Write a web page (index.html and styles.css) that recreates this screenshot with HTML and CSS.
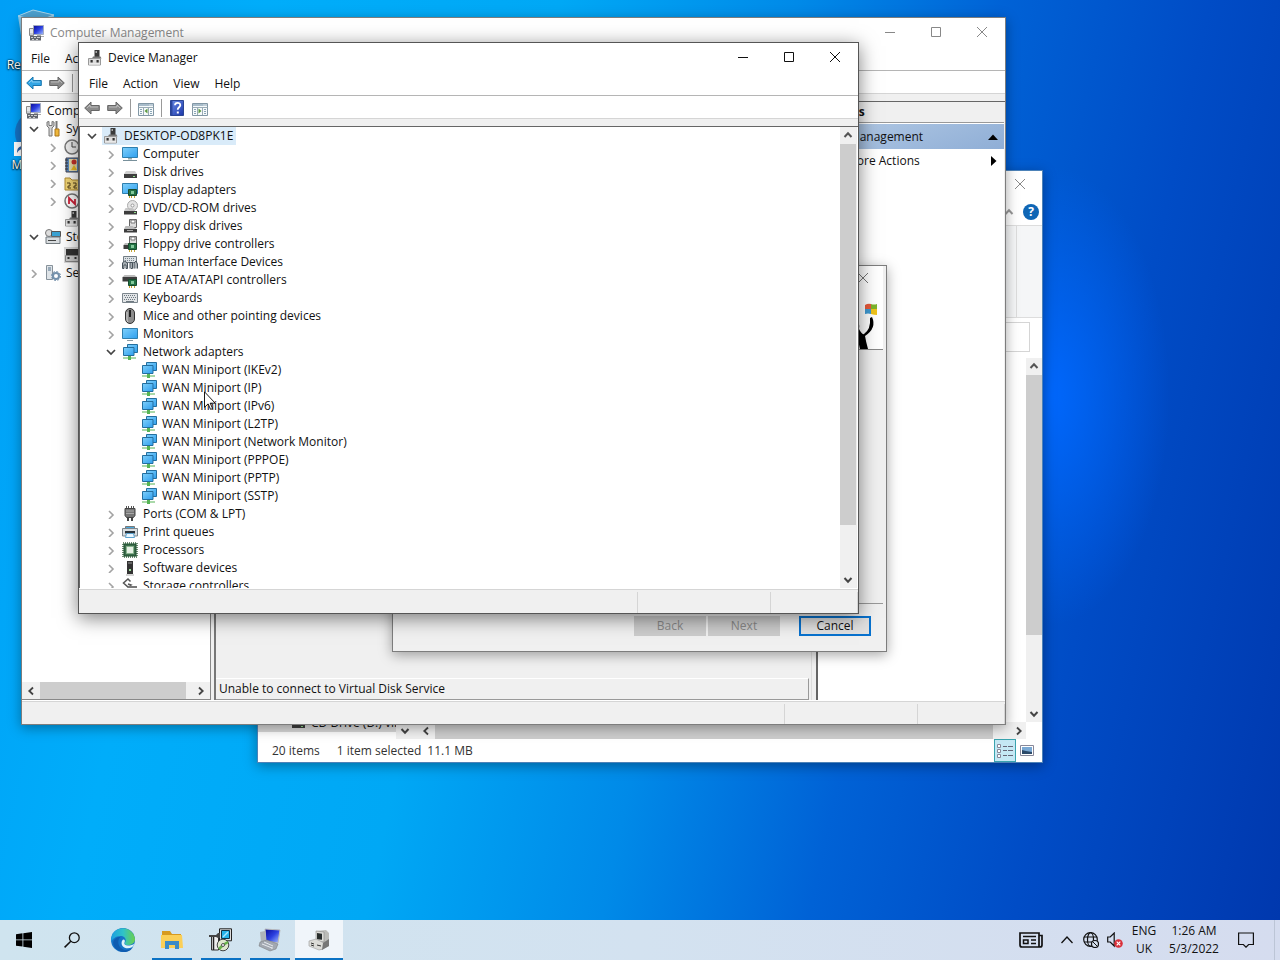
FILE: index.html
```html
<!DOCTYPE html>
<html lang="en">
<head>
<meta charset="utf-8">
<title>Device Manager</title>
<link rel="stylesheet" href="styles.css">
</head>
<body>
<svg class="sprite" aria-hidden="true">
  <defs>
    <linearGradient id="g-screen" x1="0" y1="0" x2="1" y2="1"><stop offset="0" stop-color="#7fd0fb"/><stop offset="1" stop-color="#2f9fee"/></linearGradient>
    <linearGradient id="g-help" x1="0" y1="0" x2="1" y2="1"><stop offset="0" stop-color="#6d8fe8"/><stop offset="1" stop-color="#1a35a8"/></linearGradient>
    <linearGradient id="g-navy" x1="0" y1="0" x2="1" y2="1"><stop offset="0" stop-color="#0a0a96"/><stop offset=".5" stop-color="#2b3fe0"/><stop offset="1" stop-color="#a9c4ff"/></linearGradient>
    <linearGradient id="g-edge" x1="0" y1="0" x2="1" y2="0"><stop offset="0" stop-color="#1d9fe0"/><stop offset=".5" stop-color="#2fc3c9"/><stop offset="1" stop-color="#6cd04a"/></linearGradient>
  </defs>
  <symbol id="down" viewBox="0 0 10 10"><path d="M1 3l4 4 4-4" fill="none" stroke="#444" stroke-width="1.7"/></symbol>
  <symbol id="up" viewBox="0 0 10 10"><path d="M1.500 7L5 3.300 8.500 7" fill="none" stroke="#555" stroke-width="2"/></symbol>
  <symbol id="right" viewBox="0 0 10 10"><path d="M3 2l4 4-4 4" fill="none" stroke="#a3a3a3" stroke-width="1.600"/></symbol>
  <symbol id="sleft" viewBox="0 0 10 10"><path d="M7 1.500L3.300 5 7 8.500" fill="none" stroke="#444" stroke-width="1.800"/></symbol>
  <symbol id="sright" viewBox="0 0 10 10"><path d="M3 1.500L6.700 5 3 8.500" fill="none" stroke="#444" stroke-width="1.800"/></symbol>
  <symbol id="sdown" viewBox="0 0 10 10"><path d="M1.500 3L5 6.700 8.500 3" fill="none" stroke="#444" stroke-width="2"/></symbol>
  <symbol id="min" viewBox="0 0 12 12"><path d="M1 5.500h10" stroke="currentColor"/></symbol>
  <symbol id="max" viewBox="0 0 12 12"><path d="M1.500.5h9v9h-9z" fill="none" stroke="currentColor"/></symbol>
  <symbol id="close" viewBox="0 0 12 12"><path d="M1 0l10 10M11 0L1 10" stroke="currentColor"/></symbol>
  <symbol id="back" viewBox="0 0 16 16"><path d="M.7 8L7 2v3.500h8.300v5H7V14z" stroke-width="1"/><path d="M3 8l3-3v2h8" fill="none" stroke="#fff" stroke-opacity=".4"/></symbol>
  <symbol id="fwd" viewBox="0 0 16 16"><path d="M15.300 8L9 2v3.500H.7v5H9V14z" stroke-width="1"/><path d="M2 7h8V5l3 3" fill="none" stroke="#fff" stroke-opacity=".4"/></symbol>
  <symbol id="panel" viewBox="0 0 16 14"><path d="M.5 1.500h15v12H.5z" fill="#f6fafb" stroke="#8297a5"/><path d="M1 2h14v2H1z" fill="#a8bcca"/><path d="M11.500 3h1m1 0h1" stroke="#fff"/><path d="M.5 5.500h15M5.500 5v8M10.500 5v8" stroke="#9aabb6"/><path d="M2 7.500h2m-2 2h2m-2 2h2m8-4h2m-2 2h2m-2 2h2" stroke="#8aa4b5"/></symbol>
  <symbol id="help" viewBox="0 0 14 16"><path d="M.5.5h13v15H.5z" fill="url(#g-help)" stroke="#2b4592"/><path d="M.5.5h2v15h-2z" fill="#2b469f"/><path d="M5 5.300C5 2 10.300 2 10.300 5.200c0 2-2.600 2.100-2.600 4.500" fill="none" stroke="#fff" stroke-width="1.800"/><path d="M6.800 11.500h2v2h-2z" fill="#fff"/></symbol>
  <symbol id="devmgr" viewBox="0 0 16 16"><path d="M7.500 0h5v7h-5z" fill="#3a3a3a"/><path d="M8.500 1h1.500v2H8.500z" fill="#aaa"/><path d="M6 6.500h7.500l1 2H5z" fill="#777"/><path d="M1.500 8.500h12v6.500h-12z" fill="#dcdcdc" stroke="#999"/><path d="M3.500 10h2.200v2.500H3.500zm6 0h2.200v2.500H9.500z" fill="#333"/><path d="M2 14h11" stroke="#f7f7f7"/></symbol>
  <symbol id="compmgr" viewBox="0 0 16 16"><path d="M4.500.5h10v9h-10z" fill="url(#g-navy)" stroke="#a5adc0"/><path d="M8 10h4v1h3v1H8z" fill="#aaa"/><path d="M.5 3.500h4v7h-4z" fill="#c8ccd2" stroke="#888"/><path d="M1 5h3M1 7h3" stroke="#fff"/><path d="M1 11h11v4.500H1z" fill="#60656d"/><path d="M2 12.500h2m1 0h2m1 0h3m-8 2h2m2 0h2" stroke="#ccc"/></symbol>
  <symbol id="computer" viewBox="0 0 16 16"><path d="M.5 1.500h15v10H.5z" fill="url(#g-screen)" stroke="#2f7fae"/><path d="M6 12h4v1.500H6z" fill="#9aa"/><path d="M1 14.500h14" stroke="#78909b"/></symbol>
  <symbol id="monitor" viewBox="0 0 16 16"><path d="M.5 2.500h15v10H.5z" fill="url(#g-screen)" stroke="#2f7fae"/><path d="M5 14.500h6" stroke="#8a9aa2"/></symbol>
  <symbol id="disk" viewBox="0 0 16 16"><path d="M4 7h9l2 3H2z" fill="#cfcfcf"/><path d="M2 10h13v4H2z" fill="#3d3d3d"/><path d="M11 12.500h2" stroke="#8fe08a"/></symbol>
  <symbol id="chip" viewBox="0 0 16 16"><path d="M6.500 7.500h8v6h-8z" fill="#247345" stroke="#164c2d"/><path d="M9 9h3v3H9z" fill="#82c99a"/><path d="M7.500 14v2m2-2v2m3-2v2" stroke="#c5a537"/></symbol>
  <symbol id="display" viewBox="0 0 16 16"><path d="M.5 1.500h15v10H.5z" fill="url(#g-screen)" stroke="#2f7fae"/><use href="#chip"/></symbol>
  <symbol id="dvd" viewBox="0 0 16 16"><circle cx="10.500" cy="5.500" r="5" fill="#e4e4e4" stroke="#aaa"/><circle cx="10.500" cy="5.500" r="1.500" fill="#fff" stroke="#999"/><path d="M3.500 8h7l3 3H2z" fill="#bbb" opacity=".8"/><path d="M2 11h13v3.500H2z" fill="#3d3d3d"/><path d="M12 12.500h2" stroke="#8fe08a"/></symbol>
  <symbol id="floppy" viewBox="0 0 16 16"><path d="M7.500 1.500h7v8h-7z" fill="#ddd" stroke="#666"/><path d="M9 2h4v3H9z" fill="#fff" stroke="#777"/><path d="M3.500 8h7l4 3H2z" fill="#bbb"/><path d="M2 11h13v3.500H2z" fill="#3d3d3d"/><path d="M5 12.500h6" stroke="#aaa"/></symbol>
  <symbol id="floppyctl" viewBox="0 0 16 16"><path d="M7.500.5h7v8h-7z" fill="#ddd" stroke="#666"/><path d="M9 1h4v3H9z" fill="#fff" stroke="#777"/><path d="M3 7h5l2 2H1.500z" fill="#bbb"/><path d="M1.500 9h6v4h-6z" fill="#3d3d3d"/><use href="#chip"/></symbol>
  <symbol id="hid" viewBox="0 0 16 16"><path d="M1.500 2.500h13v6h-13z" fill="#dce1e4" stroke="#737d84"/><path d="M3 4.500h10M3 6.500h10" stroke="#79858d" stroke-dasharray="1 1"/><path d="M.5 14.500V9l2-2 3 2v5.500H4V11H2v3.500zM8 14.500V8.500h2.500v6H9M12 14.500V9l2-2 1.500 3v4.500" fill="#a6adb2" stroke="#47525a"/></symbol>
  <symbol id="ide" viewBox="0 0 16 16"><path d="M2.500 3h10l2.500 2H.500z" fill="#bbb"/><path d="M.5 5H15v4.500H.5z" fill="#3d3d3d"/><use href="#chip"/></symbol>
  <symbol id="keyboard" viewBox="0 0 16 16"><path d="M.5 3.500h15v9H.5z" fill="#e2e5e7" stroke="#7c868d"/><path d="M2 5.500h12M3 7.500h11M2 9.500h12" stroke="#6d7880" stroke-dasharray="1 1"/><path d="M4 11.500h8" stroke="#6d7880"/></symbol>
  <symbol id="mouse" viewBox="0 0 16 16"><rect x="3.500" y=".5" width="9" height="15" rx="4.500" fill="#8d8d8d" stroke="#333"/><path d="M5 4v7q0 2 1 3" stroke="#d2d2d2" fill="none"/><path d="M8 2v7" stroke="#222" stroke-width="2"/></symbol>
  <symbol id="net" viewBox="0 0 16 16"><path d="M5.500.5h10v8h-10z" fill="url(#g-screen)" stroke="#246f9f"/><path d="M1.500 3.500h10.500v8H1.500z" fill="url(#g-screen)" stroke="#246f9f"/><path d="M6 12h3v1.500h5v1H9V16H6v-1.500H1v-1h5z" fill="#57b455"/></symbol>
  <symbol id="port" viewBox="0 0 16 16"><path d="M4.500 0v3m2-3v3m3-3v3m2-3v3" stroke="#555"/><path d="M3 2.500h10v7l-1.500 2h-7L3 9.500z" fill="#777" stroke="#444"/><path d="M4 5h8M4 7.500h8" stroke="#aaa"/><path d="M5 11.500h2V15H5zm4 0h2V15H9z" fill="#444"/></symbol>
  <symbol id="printer" viewBox="0 0 16 16"><path d="M3.500 2.500h9V6h-9z" fill="#4ba8dc" stroke="#777"/><path d="M.5 4.500h15v7.500H.5z" fill="#d8dde0" stroke="#7b858c"/><path d="M3 7h10v2.500H3z" fill="#27313a"/><path d="M4.500 9.500h7l1 4h-9z" fill="#e9f6ff" stroke="#5ba3d0"/></symbol>
  <symbol id="cpu" viewBox="0 0 16 16"><path d="M1 1h14v14H1z" fill="none" stroke="#6a8a70" stroke-width="2" stroke-dasharray="1 1"/><path d="M2 2h12v12H2z" fill="#3d6d4d" stroke="#1d4f2d"/><path d="M4.500 4.500h7v7h-7z" fill="#e6f1e5" stroke="#8ab58f"/></symbol>
  <symbol id="software" viewBox="0 0 16 16"><path d="M5 1h6v13H5z" fill="#333"/><path d="M6 3h4" stroke="#999"/><path d="M7 9h2v2H7z" fill="#9fe09c"/><path d="M4 15h8" stroke="#aaa"/></symbol>
  <symbol id="storage" viewBox="0 0 16 16"><path d="M8.500 3.500L6 1 1.500 5 6 9l3-2-3-1" fill="none" stroke="#555" stroke-width="1.500"/><path d="M6 8h9v3H6z" fill="#777"/></symbol>
  <symbol id="tools" viewBox="0 0 16 16"><path d="M2 1v4l2 2v8h3V7l2-2V1L7 .5v4H4v-4z" fill="#d3d3d3" stroke="#777"/><path d="M11.500 0v8" stroke="#777" stroke-width="2"/><path d="M10 8h4v7h-4z" fill="#f0b83c" stroke="#aa771b"/></symbol>
  <symbol id="clock" viewBox="0 0 16 16"><circle cx="8" cy="8" r="7" fill="#eee" stroke="#777" stroke-width="1.500"/><path d="M8 3v5h4" fill="none" stroke="#444"/></symbol>
  <symbol id="events" viewBox="0 0 16 16"><path d="M2 1h13v14H2z" fill="#5a8ac0" stroke="#445"/><path d="M5 2h8v12H5z" fill="#ebdfaa"/><path d="M1 3h3m-3 3h3m-3 3h3m-3 3h3" stroke="#333"/><circle cx="10" cy="5" r="2.500" fill="#c8332a"/><path d="M7 13l3-5 3 5z" fill="#eebb25"/></symbol>
  <symbol id="folder" viewBox="0 0 16 16"><path d="M1 3h5l2 2h7v10H1z" fill="#f3d675" stroke="#b18b32"/><path d="M3 8h3v3H4v2h3m2-5h3v3h-2v2h3" fill="none" stroke="#57421a"/></symbol>
  <symbol id="perf" viewBox="0 0 16 16"><circle cx="8" cy="8" r="7" fill="#fff" stroke="#777" stroke-width="1.500"/><path d="M5 11V5l6 6V6" fill="none" stroke="#d2223a" stroke-width="1.800"/></symbol>
  <symbol id="store" viewBox="0 0 16 16"><circle cx="4" cy="4" r="3.500" fill="#ddd" stroke="#777"/><path d="M6.500 2.500h9v5h-9z" fill="#3aa2d3" stroke="#555"/><path d="M1 8h14v6.500H1z" fill="#d8dcdf" stroke="#737b80"/><path d="M3 11.500h8" stroke="#444"/></symbol>
  <symbol id="diskmgr" viewBox="0 0 16 16"><path d="M2 2h13v6H2z" fill="#333"/><path d="M1.500 8.500h14v6h-14z" fill="#ccc" stroke="#888"/><path d="M3.500 10h2v2h-2zm7 0h2v2h-2z" fill="#333"/></symbol>
  <symbol id="services" viewBox="0 0 16 16"><path d="M1.500.5h6v14h-6z" fill="#dfe4e8" stroke="#87929b"/><path d="M3 3h3M3 5h3" stroke="#52708a"/><circle cx="11" cy="11" r="3" fill="none" stroke="#7592ad" stroke-width="2"/><circle cx="11" cy="11" r="4.500" fill="none" stroke="#7592ad" stroke-dasharray="2 1.500"/></symbol>
</svg>

<main class="desktop">
  <div class="shortcuts">
    <a class="shortcut" href="#bin">
      <svg viewBox="0 0 48 48" aria-hidden="true"><path d="M4 7L19 1l21 5-4 40H10z" fill="#a9d3ea" opacity=".8"/><path d="M4 7L19 1l21 5-16 6z" fill="#4fa3d2" stroke="#a5d4ed"/></svg>
      <span>Recycle Bin</span>
    </a>
    <a class="shortcut" href="#edge">
      <svg viewBox="0 0 48 48" aria-hidden="true"><circle cx="24" cy="24" r="23" fill="#1572c4"/><path d="M0 33h14v14H0z" fill="#fff"/><path d="M3 44c0-5 2-7 6-7v-3l4 5-4 4v-3c-3 0-4 1-6 4z" fill="#245fa8"/></svg>
      <span>Microsoft Edge</span>
    </a>
  </div>

  <section class="window explorer" aria-label="File Explorer">
    <header class="titlebar"><span class="caption"></span>
      <button class="winbtn" aria-label="Close"><svg><use href="#close"/></svg></button></header>
    <div class="ribbon-tabs"><svg class="i10 pale"><use href="#up"/></svg><button class="round-help" aria-label="Help">?</button></div>
    <div class="ribbon"></div>
    <div class="address"><input class="search" type="text" aria-label="Search"></div>
    <div class="explorer-body">
      <div class="explorer-main">
        <div class="nav-item"><svg class="i16"><use href="#disk"/></svg><span>CD Drive (D:) virtio</span></div>
        <div class="scroll-h explorer-h"><svg class="i10"><use href="#sdown"/></svg><svg class="i10"><use href="#sleft"/></svg><i class="thumb"></i><svg class="i10 end"><use href="#sright"/></svg></div>
      </div>
      <div class="scroll-v"><svg class="i10"><use href="#up"/></svg><i class="thumb"></i><svg class="i10"><use href="#sdown"/></svg></div>
    </div>
    <footer class="explorer-status"><span>20 items</span><span class="sel">1 item selected</span><span>11.1 MB</span>
      <div class="views">
        <button class="view on" aria-label="Details"><svg viewBox="0 0 16 14"><path d="M.5.5h3v3h-3zm0 5h3v3h-3zm0 5h3v3h-3z" fill="#fff" stroke="#889"/><path d="M6 2.500h4m1 0h5m-10 4h4m1 0h5m-10 5h4m1 0h5" stroke="#667"/></svg></button>
        <button class="view" aria-label="Large icons"><svg viewBox="0 0 16 14"><path d="M1.500 1.500h13v10h-13z" fill="#fff" stroke="#889"/><path d="M3 3h10v5H3z" fill="#7aa9d4"/><path d="M3 6l4 1 6 1v2H3z" fill="#2c4a69"/></svg></button>
      </div>
    </footer>
  </section>

  <section class="window compmgmt" aria-label="Computer Management">
    <header class="titlebar inactive"><svg class="i16"><use href="#compmgr"/></svg><span class="caption">Computer Management</span>
      <button class="winbtn" aria-label="Minimize"><svg><use href="#min"/></svg></button>
      <button class="winbtn" aria-label="Maximize"><svg><use href="#max"/></svg></button>
      <button class="winbtn" aria-label="Close"><svg><use href="#close"/></svg></button></header>
    <nav class="menubar"><button>File</button><button>Action</button></nav>
    <div class="toolbar"><button class="arrow on" aria-label="Back"><svg class="i16"><use href="#back"/></svg></button><button class="arrow" aria-label="Forward"><svg class="i16"><use href="#fwd"/></svg></button><i class="sep"></i></div>
    <div class="panes">
      <div class="pane side">
        <ul class="tree">
          <li class="row root"><svg class="i16"><use href="#compmgr"/></svg><span>Computer Management (Local)</span></li>
          <li class="row d1"><svg class="chev"><use href="#down"/></svg><svg class="i16"><use href="#tools"/></svg><span>System Tools</span></li>
          <li class="row d2"><svg class="chev"><use href="#right"/></svg><svg class="i16"><use href="#clock"/></svg></li>
          <li class="row d2"><svg class="chev"><use href="#right"/></svg><svg class="i16"><use href="#events"/></svg></li>
          <li class="row d2"><svg class="chev"><use href="#right"/></svg><svg class="i16"><use href="#folder"/></svg></li>
          <li class="row d2"><svg class="chev"><use href="#right"/></svg><svg class="i16"><use href="#perf"/></svg></li>
          <li class="row d2"><i class="chev"></i><svg class="i16"><use href="#devmgr"/></svg></li>
          <li class="row d1"><svg class="chev"><use href="#down"/></svg><svg class="i16"><use href="#store"/></svg><span>Storage</span></li>
          <li class="row d2 picked"><i class="chev"></i><svg class="i16"><use href="#diskmgr"/></svg></li>
          <li class="row d1"><svg class="chev"><use href="#right"/></svg><svg class="i16"><use href="#services"/></svg><span>Services</span></li>
        </ul>
        <div class="scroll-h"><svg class="i10"><use href="#sleft"/></svg><i class="thumb"></i><svg class="i10 end"><use href="#sright"/></svg></div>
      </div>
      <div class="pane center"><p class="notice">Unable to connect to Virtual Disk Service</p></div>
      <div class="pane actions">
        <h2>Actions</h2>
        <div class="act head"><span>Disk Management</span><svg class="i10" viewBox="0 0 10 10"><path d="M0 8l5-5.500L10 8z"/></svg></div>
        <div class="act more"><span>More Actions</span><svg class="i10" viewBox="0 0 10 10"><path d="M3 0l5.500 5L3 10z"/></svg></div>
      </div>
    </div>
    <footer class="statusbar"><i></i><i></i><i></i></footer>
  </section>

  <section class="window wizard" aria-label="Setup wizard">
    <div class="wizard-head">
      <button class="winbtn" aria-label="Close"><svg><use href="#close"/></svg></button>
      <svg class="logo" viewBox="0 0 32 48" aria-hidden="true"><path d="M14 4q3-2 6-1v5h-6z" fill="#e8593a"/><path d="M20 3q3 1 6 0v5h-6z" fill="#7db52c"/><path d="M14 8h6v5q-3-1-6 0z" fill="#3f9ad2"/><path d="M20 8h6v6q-3 0-6-1z" fill="#f0c419"/><path d="M5 15q4 6 3 13 3 6 5 5 7-5 6-16l2-1q5 11-7 19 1 6 3 13H9q-3-14-6-20z"/></svg>
    </div>
    <div class="wizard-body"></div>
    <footer class="wizard-foot"><button disabled>Back</button><button disabled>Next</button><button class="cancel">Cancel</button></footer>
  </section>

  <section class="window devmgmt" aria-label="Device Manager">
    <header class="titlebar"><svg class="i16"><use href="#devmgr"/></svg><span class="caption">Device Manager</span>
      <button class="winbtn" aria-label="Minimize"><svg><use href="#min"/></svg></button>
      <button class="winbtn" aria-label="Maximize"><svg><use href="#max"/></svg></button>
      <button class="winbtn" aria-label="Close"><svg><use href="#close"/></svg></button></header>
    <nav class="menubar"><button>File</button><button>Action</button><button>View</button><button>Help</button></nav>
    <div class="toolbar">
      <button class="arrow" aria-label="Back"><svg class="i16"><use href="#back"/></svg></button>
      <button class="arrow" aria-label="Forward"><svg class="i16"><use href="#fwd"/></svg></button>
      <i class="sep"></i>
      <button aria-label="Show console tree"><svg class="i16" viewBox="0 0 16 16"><use href="#panel" width="16" height="14" y="2"/><path d="M9.500 8.500v5L6.500 11z" fill="#5d9a40"/></svg></button>
      <i class="sep"></i>
      <button aria-label="Help"><svg class="i16"><use href="#help"/></svg></button>
      <button aria-label="Show action pane"><svg class="i16" viewBox="0 0 16 16"><use href="#panel" width="16" height="14" y="2"/><path d="M6.500 8.500v5l3-2.500z" fill="#5d9a40"/></svg></button>
    </div>
    <div class="devices">
      <ul class="tree">
        <li class="row d0"><svg class="chev"><use href="#down"/></svg><span class="chosen"><svg class="i16"><use href="#devmgr"/></svg><span>DESKTOP-OD8PK1E</span></span></li>
        <li class="row d1"><svg class="chev"><use href="#right"/></svg><svg class="i16"><use href="#computer"/></svg><span>Computer</span></li>
        <li class="row d1"><svg class="chev"><use href="#right"/></svg><svg class="i16"><use href="#disk"/></svg><span>Disk drives</span></li>
        <li class="row d1"><svg class="chev"><use href="#right"/></svg><svg class="i16"><use href="#display"/></svg><span>Display adapters</span></li>
        <li class="row d1"><svg class="chev"><use href="#right"/></svg><svg class="i16"><use href="#dvd"/></svg><span>DVD/CD-ROM drives</span></li>
        <li class="row d1"><svg class="chev"><use href="#right"/></svg><svg class="i16"><use href="#floppy"/></svg><span>Floppy disk drives</span></li>
        <li class="row d1"><svg class="chev"><use href="#right"/></svg><svg class="i16"><use href="#floppyctl"/></svg><span>Floppy drive controllers</span></li>
        <li class="row d1"><svg class="chev"><use href="#right"/></svg><svg class="i16"><use href="#hid"/></svg><span>Human Interface Devices</span></li>
        <li class="row d1"><svg class="chev"><use href="#right"/></svg><svg class="i16"><use href="#ide"/></svg><span>IDE ATA/ATAPI controllers</span></li>
        <li class="row d1"><svg class="chev"><use href="#right"/></svg><svg class="i16"><use href="#keyboard"/></svg><span>Keyboards</span></li>
        <li class="row d1"><svg class="chev"><use href="#right"/></svg><svg class="i16"><use href="#mouse"/></svg><span>Mice and other pointing devices</span></li>
        <li class="row d1"><svg class="chev"><use href="#right"/></svg><svg class="i16"><use href="#monitor"/></svg><span>Monitors</span></li>
        <li class="row d1"><svg class="chev"><use href="#down"/></svg><svg class="i16"><use href="#net"/></svg><span>Network adapters</span></li>
        <li class="row d2"><i class="chev"></i><svg class="i16"><use href="#net"/></svg><span>WAN Miniport (IKEv2)</span></li>
        <li class="row d2"><i class="chev"></i><svg class="i16"><use href="#net"/></svg><span>WAN Miniport (IP)</span></li>
        <li class="row d2"><i class="chev"></i><svg class="i16"><use href="#net"/></svg><span>WAN Miniport (IPv6)</span></li>
        <li class="row d2"><i class="chev"></i><svg class="i16"><use href="#net"/></svg><span>WAN Miniport (L2TP)</span></li>
        <li class="row d2"><i class="chev"></i><svg class="i16"><use href="#net"/></svg><span>WAN Miniport (Network Monitor)</span></li>
        <li class="row d2"><i class="chev"></i><svg class="i16"><use href="#net"/></svg><span>WAN Miniport (PPPOE)</span></li>
        <li class="row d2"><i class="chev"></i><svg class="i16"><use href="#net"/></svg><span>WAN Miniport (PPTP)</span></li>
        <li class="row d2"><i class="chev"></i><svg class="i16"><use href="#net"/></svg><span>WAN Miniport (SSTP)</span></li>
        <li class="row d1"><svg class="chev"><use href="#right"/></svg><svg class="i16"><use href="#port"/></svg><span>Ports (COM &amp; LPT)</span></li>
        <li class="row d1"><svg class="chev"><use href="#right"/></svg><svg class="i16"><use href="#printer"/></svg><span>Print queues</span></li>
        <li class="row d1"><svg class="chev"><use href="#right"/></svg><svg class="i16"><use href="#cpu"/></svg><span>Processors</span></li>
        <li class="row d1"><svg class="chev"><use href="#right"/></svg><svg class="i16"><use href="#software"/></svg><span>Software devices</span></li>
        <li class="row d1"><svg class="chev"><use href="#right"/></svg><svg class="i16"><use href="#storage"/></svg><span>Storage controllers</span></li>
      </ul>
      <div class="scroll-v"><svg class="i10"><use href="#up"/></svg><i class="thumb"></i><svg class="i10"><use href="#sdown"/></svg></div>
    </div>
    <footer class="statusbar"><i></i><i></i><i></i></footer>
  </section>

  <svg class="cursor" viewBox="0 0 12 19" aria-hidden="true"><path d="M.5.8v15.500l3.600-3.400 2.500 5.500 2-.9-2.400-5.300h5z" fill="#fff" stroke="#000" stroke-width=".9"/></svg>
</main>

<footer class="taskbar">
  <button class="task start" aria-label="Start"><svg viewBox="0 0 16 16"><path d="M0 2.200L6.500 1.300v6.200H0zM7.300 1.200L16 0v7.500H7.300zM0 8.300h6.500v6.300L0 13.700zM7.300 8.300H16V16l-8.700-1.200z"/></svg></button>
  <button class="task" aria-label="Search"><svg viewBox="0 0 16 16"><circle cx="10.300" cy="5.700" r="4.900" fill="none" stroke="#111" stroke-width="1.300"/><path d="M6.800 9.200L.6 15.400" stroke="#111" stroke-width="1.500"/></svg></button>
  <button class="task big edge" aria-label="Microsoft Edge"><svg viewBox="0 0 24 24"><circle cx="12" cy="12" r="12" fill="#1674c8"/><path d="M.3 10C2-3 22-3.500 24 11c0 4-3.500 6-7 6-3 0-4-1.200-3-2.500 2-2.500 0-6.500-4.500-6.500C5 8 1 11 .3 14z" fill="url(#g-edge)"/><path d="M9.500 9c-3.500 3-3 10 3 12.500 3 1.200 7 .5 9.500-2.500-1.500 3-5 5-9 5C5 24 1 17 2.500 13c1-2.500 4-4.500 7-4z" fill="#0f5cb0"/><path d="M13.500 14.500c-.8 1.500.5 2.900 3.500 2.900 2.500 0 5-.6 6.500-2-1.500 5.500-9 6.500-12 2.500-1.500-2.200-1-6 1-6.500 1.300 0 1.800 1.600 1 3.100z" fill="#dff3fa"/></svg></button>
  <button class="task big open" aria-label="File Explorer"><svg viewBox="0 0 24 24"><path d="M2 3h8l2 3h9v4H2z" fill="#d79a20"/><path d="M1 7h21l1 13H1z" fill="#fbcf57"/><path d="M5 13h14v8h-4v-4H9v4H5z" fill="#3b8bc9"/></svg></button>
  <button class="task big open" aria-label="Setup"><svg viewBox="0 0 24 24"><path d="M10.500.8h12v12h-12z" fill="#ddd" stroke="#222"/><path d="M12.500 2.500h8v8h-8z" fill="#25b4ea" stroke="#134"/><path d="M14 9l5-5" stroke="#a8e6ff" stroke-width="1.500"/><path d="M2.500 8h7v14h-7z" fill="#eee" stroke="#333"/><path d="M4.500 9v13" stroke="#222" stroke-width="1.500"/><path d="M0 7h7l2-2h2v5H9L7 9H0z" fill="#444"/><circle cx="14" cy="17" r="5.800" fill="#dfe8cf" stroke="#444"/><path d="M14 17l5-3M14 17l-4 4" stroke="#67b34b" stroke-width="2.500"/><circle cx="14" cy="17" r="1.500" fill="#fff" stroke="#555"/></svg></button>
  <button class="task big open" aria-label="Computer Management"><svg viewBox="0 0 24 24"><path d="M7 1l15 1-2 13-12-2z" fill="url(#g-navy)" stroke="#bbb"/><path d="M2 4l5-1 1 10-5 1z" fill="#aeb3ba"/><path d="M2 14l7-2 11 4-2 5-6 2L1 18z" fill="#a2a8b1" stroke="#777" stroke-width=".5"/><path d="M4 16l10 4M6 14l9 4M14 21v-2" stroke="#e7eaee"/></svg></button>
  <button class="task big open active" aria-label="Device Manager"><svg viewBox="0 0 24 24"><path d="M9 3l10-1 3 3v13l-8 4-5-3z" fill="#bcbcb8"/><path d="M9 3l8 1v10l-8-1z" fill="#dcdcd8" stroke="#888" stroke-width=".6"/><path d="M10 5l5 .8v6l-5-.6z" fill="#282d2d"/><path d="M2 13l7-2 8 4-1 6-4 1-10-4z" fill="#dcdcd8" stroke="#999" stroke-width=".6"/><path d="M4 15l3 1m-3 1l3 1m3-1l4 1" stroke="#333"/><path d="M16 15l6-4v7l-7 4z" fill="#777"/></svg></button>
  <div class="tray">
    <button class="news" aria-label="News"><svg viewBox="0 0 24 16"><path d="M1 1h19v14H3q-2 0-2-2zM20 3.500h3V13q0 2-2 2h-3" fill="none" stroke="#111" stroke-width="1.700"/><path d="M4 4.500h13M12 8h5m-5 3.500h5M4.500 8h4.500v3.500H4.500z" fill="none" stroke="#111" stroke-width="1.500"/></svg></button>
    <button class="t12" aria-label="Hidden icons"><svg viewBox="0 0 12 12"><path d="M.5 9L6 3l5.500 6" fill="none" stroke="#111" stroke-width="1.300"/></svg></button>
    <button class="t16" aria-label="Network"><svg viewBox="0 0 16 16"><circle cx="7.500" cy="7.500" r="6.800" fill="none" stroke="#111" stroke-width="1.200"/><ellipse cx="7.500" cy="7.500" rx="3" ry="6.800" fill="none" stroke="#111" stroke-width="1.200"/><path d="M1 5h13M1 10h13" stroke="#111" stroke-width="1.200"/><circle cx="12" cy="12" r="3.500" fill="#d6e0ee" stroke="#111" stroke-width="1.200"/><path d="M9.500 9.500l5 5" stroke="#111"/></svg></button>
    <button class="t16 vol" aria-label="Volume"><svg viewBox="0 0 16 16"><path d="M.7 5h2.500l4-4v13l-4-4H.7z" fill="none" stroke="#111" stroke-width="1.200"/><circle cx="11.500" cy="11.500" r="4.300" fill="#d9303a"/><path d="M9.700 9.700l3.600 3.600m0-3.600l-3.600 3.600" stroke="#fff" stroke-width="1.200"/></svg></button>
    <button class="lang">ENG<br>UK</button>
    <button class="clock">1:26 AM<br>5/3/2022</button>
    <button class="t16 note" aria-label="Notifications"><svg viewBox="0 0 16 16"><path d="M.6 1h14.800v11.500h-4.800L8 15.200l-2.600-2.700H.6z" fill="none" stroke="#111" stroke-width="1.200"/></svg></button>
    <i class="peek"></i>
  </div>
</footer>
</body>
</html>
```
FILE: styles.css
```css
* { box-sizing: border-box; }
body {
  margin: 0;
  height: 100vh;
  display: flex;
  flex-direction: column;
  overflow: hidden;
  font: 12px/18px "Open Sans", "Noto Sans", sans-serif;
  color: #111;
}
ul, p, h2 { margin: 0; padding: 0; list-style: none; font-size: 12px; }
button { font: inherit; color: inherit; background: none; border: 0; padding: 0; }
svg { display: block; flex: none; }
.sprite { position: absolute; width: 0; height: 0; }
.i16 { width: 16px; height: 16px; }
.i10 { width: 10px; height: 10px; }

.desktop {
  flex: 1;
  position: relative;
  overflow: hidden;
  background:
    radial-gradient(ellipse 120px 230px at 82% 43%, rgba(0, 104, 255, .95), rgba(0, 96, 255, 0)),
    linear-gradient(102deg, #009ff6 0%, #00adfa 18%, #00a8f5 38%, #008ae8 54%, #0062d6 68%, #004cc6 82%, #0038ae 100%);
}
.shortcuts { display: flex; flex-direction: column; width: 76px; padding-top: 9px; gap: 36px; }
.shortcut { display: flex; flex-direction: column; align-items: center; color: #fff; text-decoration: none; text-align: center; line-height: 16px; text-shadow: 0 1px 2px #000, 0 0 2px #000; }
.shortcut svg { width: 48px; height: 48px; }

.window {
  position: absolute;
  display: flex;
  flex-direction: column;
  background: #fff;
  border: 1px solid #7d7d7d;
  box-shadow: 0 3px 12px rgba(0, 0, 0, .35);
}
.explorer { inset: 170px 237px 157px 257px; border-color: #4d82b8; }
.compmgmt { inset: 17px 274px 195px 21px; }
.wizard { inset: 265px 393px 268px 392px; }
.devmgmt { inset: 42px 421px 306px 78px; border-color: #555; box-shadow: 0 4px 18px rgba(0, 0, 0, .5); }

.titlebar { display: flex; align-items: center; height: 30px; padding-left: 8px; gap: 5px; }
.caption { flex: 1; white-space: nowrap; }
.inactive, .explorer .titlebar { color: #888; }
.winbtn { width: 46px; height: 28px; display: grid; place-items: center; margin-left: -5px; }
.winbtn svg { width: 12px; height: 12px; }
.menubar { display: flex; height: 23px; padding-left: 10px; gap: 15px; border-bottom: 1px solid #b5b5b5; }
.toolbar { display: flex; align-items: center; height: 31px; padding: 0 5px 7px; gap: 7px; border-bottom: 1px solid #666; background: linear-gradient(#fff 22px, #d5d5d5 22px, #d5d5d5 23px, #f0f0f0 23px); }
.arrow svg { fill: #8c8c8c; stroke: #666; }
.arrow.on svg { fill: #32a5e4; stroke: #1976ae; }
.sep { width: 1px; height: 18px; background: #999; }

.tree { flex: 1; overflow: hidden; white-space: nowrap; }
.row { display: flex; align-items: center; height: 18px; gap: 5px; }
.row .chev { width: 10px; height: 10px; flex: none; margin-right: 1px; }
.devices { flex: 1; min-height: 0; display: flex; margin-right: 1px; border-left: 1px solid #666; border-right: 1px solid #eee; }
.devices .d0 { padding-left: 7px; }
.devices .d1 { padding-left: 26px; }
.devices .d2 { padding-left: 45px; }
.chosen { display: flex; gap: 5px; height: 18px; align-items: center; padding: 0 3px 0 1px; margin-left: -1px; background: #d9ebf9; }

.scroll-v { width: 16px; display: flex; flex-direction: column; align-items: center; justify-content: space-between; background: #f0f0f0; padding: 3px 0; gap: 4px; }
.scroll-v .thumb { width: 100%; background: #cdcdcd; flex: 384; }
.devices .scroll-v::after, .explorer .scroll-v::after { content: ""; order: 1; flex: 42; }
.scroll-v svg:last-child { order: 2; }
.scroll-h { display: flex; align-items: center; height: 17px; padding: 0 4px; gap: 4px; background: #f0f0f0; }
.scroll-h .thumb { flex: 1; height: 100%; background: #cdcdcd; }
.statusbar { display: flex; height: 24px; margin-top: 1px; padding-top: 2px; background: #f0f0f0; border-top: 1px solid #d5d5d5; }
.statusbar i { flex: 1; border-right: 1px solid #d5d5d5; }
.statusbar i:nth-child(2) { flex: 0 0 133px; }
.statusbar i:nth-child(3) { flex: 0 0 87px; }

.panes { flex: 1; min-height: 0; display: flex; background: #f0f0f0; gap: 4px; }
.compmgmt .titlebar { height: 29px; padding-left: 7px; }
.compmgmt .menubar { height: 24px; padding-left: 9px; }
.compmgmt .toolbar { padding-left: 4px; }
.compmgmt .statusbar { height: 23px; }
.pane { display: flex; flex-direction: column; background: #fff; }
.side { width: 189px; border-right: 1px solid #888; border-bottom: 1px solid #888; }
.side .root { padding-left: 4px; }
.side .d1 { padding-left: 7px; }
.side .d2 { padding-left: 26px; }
.side .scroll-h .end { margin-left: 6px; }
.picked .i16 { background: #d9d9d9; }
.center { flex: 1; justify-content: flex-end; background: #f0f0f0; border-left: 2px solid #777; border-right: 1px solid #ddd; margin-left: -1px; padding-right: 2px; }
.notice { padding: 1px 3px; border: 1px solid #999; border-top-color: #fff; border-left: 0; }
.actions { width: 188px; border-left: 2px solid #666; margin-right: 1px; }
.actions h2 { height: 21px; padding-left: 2px; line-height: 20px; background: #f0f0f0; border-bottom: 1px solid #999; }
.act { display: flex; align-items: center; justify-content: space-between; height: 24px; padding: 0 6px 0 28px; }
.act.head { height: 25px; margin-top: 1px; padding-left: 4px; background: linear-gradient(160deg, #b2c9e4, #8faed6); }

.wizard { background: #f0f0f0; }
.wizard-head { display: flex; flex-direction: column; align-items: flex-end; height: 84px; background: #fff; border-bottom: 1px solid #888; margin-right: 3px; }
.wizard-head .winbtn { height: 26px; color: #777; margin-right: -3px; }
.logo { width: 32px; height: 48px; margin: 9px 0 0; }
.wizard-body { flex: 1; border-bottom: 1px solid #999; margin-right: 3px; }
.wizard-foot { display: flex; justify-content: flex-end; align-items: flex-start; height: 47px; padding: 12px 15px 0; gap: 2px; }
.wizard-foot button { width: 72px; height: 20px; line-height: 18px; background: #ccc; color: #888; }
.wizard-foot .cancel { margin-left: 17px; line-height: 14px; border: 2px solid #0872cf; background: #e1e1e1; color: #111; }

.explorer .titlebar { height: 28px; }
.explorer .titlebar .winbtn { width: 44px; }
.ribbon-tabs { display: flex; align-items: center; justify-content: flex-end; gap: 9px; height: 26px; padding-right: 3px; }
.pale { opacity: .6; }
.round-help { width: 16px; height: 16px; line-height: 16px; border-radius: 50%; background: #0f66b5; color: #fff; font-weight: bold; }
.ribbon { height: 93px; background: linear-gradient(90deg, #f5f6f7 calc(100% - 26px), #ddd calc(100% - 26px), #ddd calc(100% - 25px), #f5f6f7 calc(100% - 25px)); border: 1px solid #ddd; border-width: 1px 0; }
.address { padding: 4px 12px 6px; }
.search { display: block; width: 100%; height: 30px; border: 1px solid #d5d5d5; }
.explorer-body { flex: 1; min-height: 0; display: flex; }
.explorer-main { flex: 1; display: flex; flex-direction: column; justify-content: flex-end; min-width: 0; }
.nav-item { display: flex; gap: 5px; width: 140px; padding-left: 32px; background: #d9d9d9; overflow: hidden; white-space: nowrap; margin-bottom: -10px; }
.explorer-h { margin-left: 138px; gap: 11px; position: relative; }
.explorer-h .thumb { margin-left: -7px; }
.explorer-h .end { margin-left: 10px; margin-right: -2px; }
.explorer .scroll-v { margin-bottom: 17px; }
.explorer .scroll-v .thumb { flex: 262; }
.explorer .scroll-v::after { flex: 66; }
.explorer-status { display: flex; align-items: center; height: 23px; padding-left: 14px; color: #333; }
.explorer-status .sel { margin: 0 6px 0 17px; }
.views { display: flex; margin-left: auto; padding-right: 4px; }
.view { width: 22px; height: 23px; display: grid; place-items: center; border: 1px solid transparent; }
.view svg { width: 16px; height: 14px; }
.view.on { background: #c5e8f4; border-color: #3aa3ae; }

.cursor { position: absolute; left: 204px; top: 391px; width: 12px; height: 19px; }

.taskbar { display: flex; height: 40px; background: linear-gradient(90deg, #cfe4ef, #d3e2f0 50%, #d5dcef); }
.task { width: 48px; display: grid; place-items: center; padding-top: 2px; border-bottom: 2px solid transparent; }
.task svg { width: 16px; height: 16px; }
.task.big { margin-left: 1px; }
.task.big svg { width: 24px; height: 24px; }
.task.edge { margin-left: 3px; }
.open { background: linear-gradient(#0b72c4, #0b72c4) 50% 100% / 40px 2px no-repeat; background-origin: border-box; }
.active { background-color: #f0f5fa; background-size: 48px 2px; }
.tray { display: flex; align-items: center; margin-left: auto; }
.tray button { display: grid; place-items: center; }
.news svg { width: 24px; height: 16px; }
.news { margin-right: 18px; }
.t12 { margin-right: 10px; }
.t12 svg { width: 12px; height: 12px; }
.t16 svg { width: 16px; height: 16px; }
.vol { margin-left: 8px; }
.lang { width: 28px; margin-left: 7px; text-align: center; }
.clock { width: 72px; text-align: center; }
.note { margin-left: 8px; }
.peek { width: 1px; height: 40px; margin: 0 5px 0 20px; background: #bcc5d6; }
```
